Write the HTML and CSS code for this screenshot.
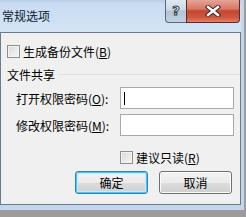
FILE: index.html
```html
<!DOCTYPE html>
<html lang="zh-CN">
<head>
    <meta charset="UTF-8">
    <title>常规选项</title>
    <link rel="stylesheet" href="styles.css">
</head>
<body>
    <div class="window">
        <div class="titlebar">
            <span class="title">常规选项</span>
            <div class="caption-buttons">
                <div class="cap-btn help-btn"><span>?</span></div>
                <div class="cap-btn close-btn">
                    <svg width="16" height="12" viewBox="0 0 16 12">
                        <path d="M3 2 L13 10 M13 2 L3 10" stroke="#3b2a28" stroke-width="4.4" stroke-linecap="square"/>
                        <path d="M3 2 L13 10 M13 2 L3 10" stroke="#ffffff" stroke-width="2.4" stroke-linecap="square"/>
                    </svg>
                </div>
            </div>
        </div>

        <div class="panel">
            <div class="check-row backup-row">
                <span class="checkbox"></span>
                <span>生成备份文件(<u>B</u>)</span>
            </div>

            <div class="group-title">
                <span>文件共享</span>
                <span class="group-line"></span>
            </div>

            <div class="field-row">
                <span class="field-label">打开权限密码(<u>O</u>):</span>
                <div class="text-box"><span class="caret"></span></div>
            </div>
            <div class="field-row second">
                <span class="field-label">修改权限密码(<u>M</u>):</span>
                <div class="text-box"></div>
            </div>

            <div class="check-row readonly-row">
                <span class="checkbox"></span>
                <span>建议只读(<u>R</u>)</span>
            </div>

            <div class="button-row">
                <button class="dlg-button default">确定</button>
                <button class="dlg-button">取消</button>
            </div>
        </div>
    </div>
</body>
</html>
```

FILE: styles.css
```css
:root {
    --panel-color: #f0f0f0;
    --frame-color: #c2d7ee;
    --text-color: #000000;
}

body {
    margin: 0;
    width: 246px;
    height: 217px;
    overflow: hidden;
    background: #9c9c9c;
    font-family: "Noto Sans CJK SC", "Noto Sans", sans-serif;
    font-size: 12px;
    color: var(--text-color);
}

.window {
    width: 241px;
    padding-right: 3px;
    padding-bottom: 5px;
    background: var(--frame-color);
}

.titlebar {
    height: 32px;
    display: flex;
    justify-content: space-between;
    align-items: flex-start;
    padding-right: 1px;
    background: linear-gradient(#b9cde3 0, #c9dcf2 4px, #d4e4f6 100%);
}

.title {
    margin-left: 2px;
    margin-top: 7px;
    line-height: 18px;
    color: #0b1a2e;
}

.caption-buttons {
    display: flex;
}

.cap-btn {
    height: 22px;
    display: flex;
    align-items: center;
    justify-content: center;
    border: 1px solid #5b6b7d;
    border-top: none;
    box-sizing: content-box;
}

.help-btn {
    width: 20px;
    border-right: none;
    border-bottom-left-radius: 4px;
    background: linear-gradient(#dfe8f1 0, #ccd9e6 45%, #b2c3d5 50%, #c3d2e1 100%);
}

.help-btn span {
    font-family: "DejaVu Sans", sans-serif;
    font-weight: bold;
    font-size: 13px;
    color: #ffffff;
    -webkit-text-stroke: 1px #2d3a48;
    line-height: 14px;
}

.close-btn {
    width: 52px;
    border-color: #5c2a24;
    border-bottom-right-radius: 4px;
    background: linear-gradient(#e6a495 0, #d77965 40%, #c4462f 50%, #d0573e 80%, #e48366 100%);
}

.panel {
    background: var(--panel-color);
    border: 1px solid #6b7c8e;
    padding-bottom: 10px;
}

.check-row {
    display: flex;
    align-items: center;
    height: 13px;
}

.checkbox {
    width: 11px;
    height: 11px;
    border: 1px solid #8e8f8f;
    background: linear-gradient(135deg, #d8d8d8, #f8f8f8);
    box-shadow: inset 0 0 0 1px #f4f4f4;
    margin-right: 3px;
}

.backup-row {
    margin-top: 12px;
    padding-left: 6px;
}

.group-title {
    display: flex;
    align-items: center;
    height: 16px;
    margin-top: 8px;
    padding-left: 6px;
}

.group-line {
    flex: 1;
    height: 1px;
    margin-left: 4px;
    background: #d5dfe5;
}

.field-row {
    display: flex;
    align-items: center;
    height: 22px;
    margin-top: 5px;
    padding-left: 15px;
    padding-right: 6px;
}

.field-label {
    flex: 1;
}

.text-box {
    width: 112px;
    height: 20px;
    border: 1px solid #a8a8a8;
    background: #ffffff;
    display: flex;
    align-items: center;
}

.caret {
    width: 1px;
    height: 13px;
    margin-left: 3px;
    background: #000000;
}

.readonly-row {
    margin-top: 15px;
    padding-left: 119px;
}

.button-row {
    display: flex;
    justify-content: flex-end;
    gap: 11px;
    margin-top: 7px;
    padding-right: 8px;
}

.dlg-button {
    width: 73px;
    height: 23px;
    padding: 0;
    border: 1px solid #707070;
    border-radius: 3px;
    background: linear-gradient(#f2f2f2 0, #ebebeb 50%, #dddddd 51%, #cfcfcf 100%);
    box-shadow: inset 0 0 0 1px #fbfbfb;
    font-family: inherit;
    font-size: 12px;
    color: var(--text-color);
}

.dlg-button.default {
    border-color: #3c7fb1;
    box-shadow: inset 0 0 0 1px #48c8f4, inset 0 0 0 2px #c5ebfb;
}
```
